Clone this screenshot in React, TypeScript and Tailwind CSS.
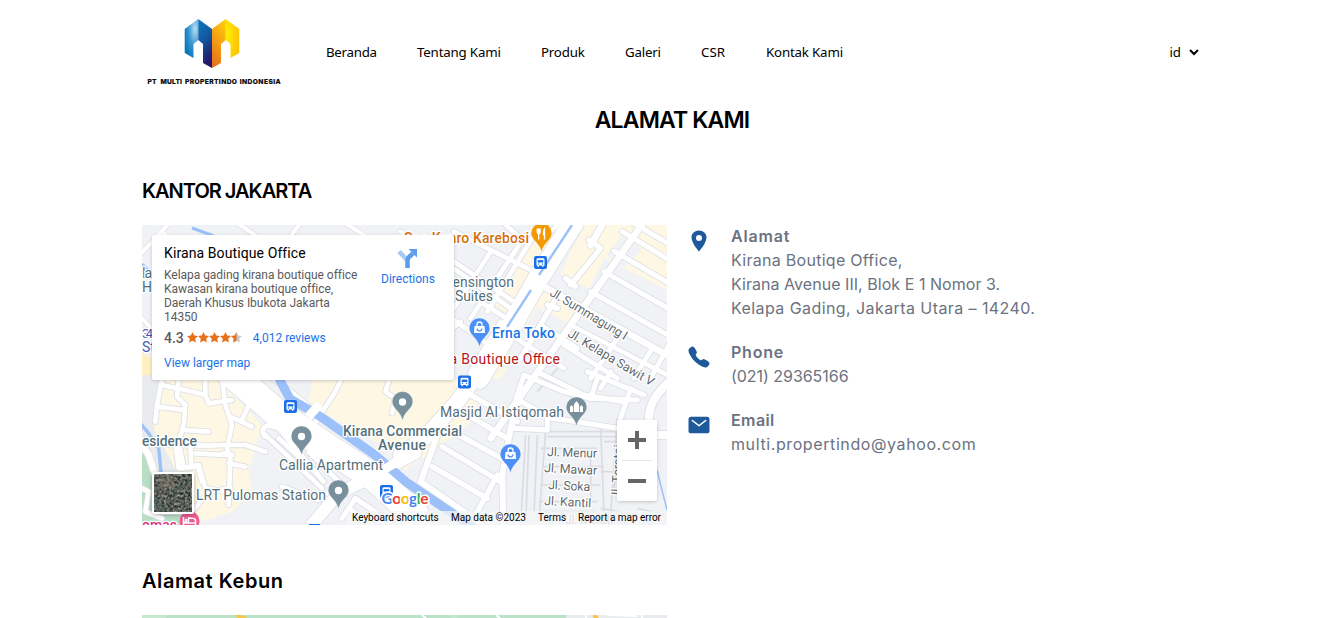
import React from "react";
import { IoCall, IoLocationSharp, IoMail } from "react-icons/io5";

const navItems = [
  { label: "Beranda", box: "w-[51px] tracking-[-0.28px]" },
  { label: "Tentang Kami", box: "w-[84px] tracking-[-0.18px]" },
  { label: "Produk", box: "w-[44px] tracking-[-0.2px]" },
  { label: "Galeri", box: "w-[36px] tracking-[-0.2px]" },
  { label: "CSR", box: "w-[25px] tracking-[0px]" },
  { label: "Kontak Kami", box: "w-[78px] tracking-[-0.18px]" },
];

function Logo() {
  return (
    <svg viewBox="0 0 134 70" className="block h-[70px] w-[134px]">
      <defs>
        <radialGradient id="lg1" cx="0.75" cy="0.25" r="0.8">
          <stop offset="0" stopColor="#b9def3" />
          <stop offset="0.55" stopColor="#3a97cf" />
          <stop offset="1" stopColor="#0b78bd" />
        </radialGradient>
        <linearGradient id="lg2" x1="0" y1="0" x2="0.3" y2="1">
          <stop offset="0" stopColor="#0a79be" />
          <stop offset="0.5" stopColor="#1457a0" />
          <stop offset="1" stopColor="#25176a" />
        </linearGradient>
        <linearGradient id="lg3" x1="0.6" y1="0" x2="0.2" y2="1">
          <stop offset="0" stopColor="#fdc60b" />
          <stop offset="0.5" stopColor="#f39b13" />
          <stop offset="1" stopColor="#e5701c" />
        </linearGradient>
        <radialGradient id="lg4" cx="0.1" cy="0.4" r="0.8">
          <stop offset="0" stopColor="#ffee00" />
          <stop offset="1" stopColor="#fdc707" />
        </radialGradient>
      </defs>
      <path d="M37.7 12 51.3 2V23L46.5 27V41L37.7 36Z" fill="url(#lg1)" />
      <path d="M51.3 2 65 12V51L56 46V27L51.3 23Z" fill="url(#lg2)" />
      <path d="M65 12 78.7 2V23L74 27V46L65 51Z" fill="url(#lg3)" />
      <path d="M78.7 2 92.3 12V36L83.5 41V27L78.7 23Z" fill="url(#lg4)" />
      <g fontFamily="Inter, sans-serif" fontWeight="800" fontSize="6.7" fill="#080808" stroke="#080808" strokeWidth=".15">
        <text x="0.5" y="66.9" textLength="9">PT</text>
        <text x="13.5" y="66.9" textLength="21.5">MULTI</text>
        <text x="38" y="66.9" textLength="52">PROPERTINDO</text>
        <text x="92.7" y="66.9" textLength="41">INDONESIA</text>
      </g>
    </svg>
  );
}

type Road = { d: string; w: number };

/* Each street block is drawn on a 3x grid that is scaled down into its quadrant. */
const northEast: Road[] = [
  { d: "M510 -10 400 165 330 290 225 460", w: 62 },
  { d: "M600 -10 560 60M720 -10 260 640", w: 20 },
  { d: "M430 190 789 390", w: 20 },
  { d: "M560 200 800 335M600 140 800 255M630 78 800 178M690 -5 800 60M655 20 800 108", w: 15 },
  { d: "M300 -5 340 30M-10 20 320 250M150 20 390 140M150 110 330 230M150 180 300 275", w: 14 },
  { d: "M345 60 200 280M260 80 150 250M390 30 250 260", w: 14 },
  { d: "M150 285 270 370M120 330 170 290M290 290 200 440", w: 14 },
  { d: "M555 45 590 70M590 70 500 180M485 160 515 185M430 240 460 250M465 205 350 400", w: 16 },
  { d: "M335 340 480 430M480 360 640 460M410 300 520 370M500 300 790 450", w: 14 },
  { d: "M640 340 560 460M745 370 690 460M800 350 740 460", w: 14 },
  { d: "M420 -10 440 20 460 0", w: 12 },
];
const southWest: Road[] = [
  { d: "M250 -20 400 110 560 220 700 310 820 420", w: 82 },
  { d: "M820 235 680 310 590 355 500 460", w: 36 },
  { d: "M370 -10 470 70 540 130 660 210", w: 16 },
  { d: "M610 -10 580 50 515 150M750 -10 730 50 760 70 750 115", w: 14 },
  { d: "M60 15 45 90 40 140M60 30 130 45 190 60 200 85 270 75M110 15 105 65 130 90 125 150 110 200 125 280", w: 14 },
  { d: "M190 60 190 15M240 10 250 90 270 150 255 220 265 250 260 390M265 125 330 155M330 70 300 135", w: 14 },
  { d: "M45 95 125 105M125 165 200 170M80 210 200 212 250 210 310 210 370 230M160 235 255 240M260 265 310 275M245 235 270 240", w: 14 },
  { d: "M100 205 110 280 170 270 190 340 250 350M170 280 180 320M120 280 160 275M145 210 148 270", w: 14 },
  { d: "M370 185Q350 160 380 150L410 160 545 320M365 175 540 340M410 190 530 300M500 230 590 320", w: 14 },
  { d: "M150 410 200 350 265 340M420 335 530 375 560 350", w: 14 },
  { d: "M-10 195 20 240 40 300", w: 20 },
  { d: "M0 340 20 350 10 410 60 430", w: 14 },
  { d: "M600 430 640 370 730 430M620 400 690 450", w: 15 },
];
const southEast: Road[] = [
  { d: "M225 -10 160 80 60 190 -10 240", w: 46 },
  { d: "M180 40 100 180 50 320 180 410 240 460M345 75 320 160 295 300 298 460", w: 18 },
  { d: "M200 60 340 140M140 90 310 190M110 150 310 260M115 215 290 320M85 275 250 370M280 300 220 410", w: 16 },
  { d: "M360 0 480 50 560 70 700 75M400 -10 540 60 660 80M360 0 330 90M330 160 430 165M430 165 430 130M345 75 440 130 520 140 640 160", w: 15 },
  { d: "M580 10 560 70M550 -10 720 60M680 40 650 130M620 -10 590 40", w: 15 },
  { d: "M790 25Q730 80 735 140L755 180H800", w: 24 },
];
const southEastMinor =
  "M365 180 350 450M375 180 365 450M400 180 390 420M430 170H640M430 185H640M410 220H580M415 275H600M410 330H590M405 380H580M425 165 405 440M590 160 600 420M640 130 620 420M460 -20 400 50M600 200H640M590 290H640M560 240V390M640 210 630 350M420 410H580M590 400 700 420M700 400 789 420";

function Roads({ roads, casing }: { roads: Road[]; casing: boolean }) {
  return (
    <>
      {roads.map((r, i) => (
        <path key={i} d={r.d} fill="none" stroke={casing ? "#dcdfe5" : "#ffffff"} strokeWidth={casing ? r.w + 5 : r.w} strokeLinecap="round" strokeLinejoin="round" />
      ))}
    </>
  );
}

const NE = "translate(262 0) scale(.33333)";
const SW = "translate(0 150) scale(.33333)";
const SE = "translate(262 150) scale(.33333)";

function Pin({ x, y, color, children }: { x: number; y: number; color: string; children?: React.ReactNode }) {
  return (
    <g transform={`translate(${x} ${y})`}>
      <path d="M0 0C-1.2-5-3-7-6-10.5C-9-13.5-10.3-16-10.3-19A10.3 10 0 0 1 10.3-19C10.3-16 9-13.5 6-10.5C3-7 1.2-5 0 0Z" fill={color} stroke="#ffffff" strokeOpacity=".45" strokeWidth=".7" />
      {children ?? <circle cy="-18.5" r="3.7" fill="#fff" />}
    </g>
  );
}

function Bag() {
  return (
    <g>
      <path d="M-5-21H5L5.5-14H-5.5Z" fill="#fff" />
      <path d="M-2.5-21V-22.5A2.5 2.5 0 0 1 2.5-22.5V-21" fill="none" stroke="#fff" strokeWidth="1.3" />
      <path d="M-2.4-18.5A2.4 2.4 0 0 0 2.4-18.5" fill="none" stroke="#4d90f5" strokeWidth="1.3" />
    </g>
  );
}

function BusStop({ x, y }: { x: number; y: number }) {
  return (
    <g transform={`translate(${x} ${y})`}>
      <rect x="-6.5" y="-6.5" width="13" height="13" rx="2" fill="#1a6ee8" />
      <path d="M-4-2.8Q-4-4.2-2.6-4.2H2.6Q4-4.2 4-2.8V3H3V4.3H1.6V3H-1.6V4.3H-3V3H-4Z" fill="#fff" />
      <path d="M-2.8-2.4H2.8V0H-2.8Z" fill="#1a6ee8" />
      <circle cx="-2" cy="1.5" r=".7" fill="#1a6ee8" />
      <circle cx="2" cy="1.5" r=".7" fill="#1a6ee8" />
    </g>
  );
}

function Label({ x, y, w, color = "#546e7a", size = 14, rotate = 0, weight = 400, children }: { x: number; y: number; w?: number; color?: string; size?: number; rotate?: number; weight?: number; children: string }) {
  return (
    <text
      transform={`translate(${x} ${y}) rotate(${rotate})`}
      textLength={w}
      fontSize={size}
      fontFamily="Roboto, sans-serif"
      fontWeight={weight}
      fill={color}
      stroke="#ffffff"
      strokeWidth="2.6"
      strokeLinejoin="round"
      paintOrder="stroke"
    >
      {children}
    </text>
  );
}

function MapDrawing() {
  return (
    <svg viewBox="0 0 525 300" className="block h-[300px] w-[525px]">
      <rect width="525" height="300" fill="#f0f2f5" />
      <path d="M0 150H22L12 205 35 240V300H0Z" fill="#e9ebef" />
      <g transform={NE} fill="#fef7e3">
        <path d="M355 90 440 0H480L310 265 270 240Z" />
        <path d="M545 0H800V200L600 100 555 190 470 150 500 80Z" />
        <path d="M420 200 530 225 490 295 400 245 360 310 345 300Z" />
        <path d="M260 410 310 430 290 460H220Z" />
      </g>
      <path d="M465 30 480 10 500 24 480 46Z" fill="#f0f2f5" />
      <g transform={SW}>
        <path d="M60 15H230L360 150 340 220 320 290 330 350 270 410 180 440 150 410V290L110 300 35 160Z" fill="#fef7e3" />
        <path d="M510 15H792V230L700 200 540 110 500 80Z" fill="#fef7e3" />
        <path d="M0 230 45 280 40 420H130V450H0Z" fill="#b8dfc4" />
        <path d="M-5 145 20 175 50 220 58 300" fill="none" stroke="#9cc0fa" strokeWidth="10" />
      </g>
      <path d="M262 155H320L338 172 328 198 296 222 262 246Z" fill="#fef7e3" />
      <g transform={NE}><Roads roads={northEast} casing /></g>
      <g transform={SW}><Roads roads={southWest} casing /></g>
      <g transform={SE}><Roads roads={southEast} casing /></g>
      <g transform={SE} fill="none" stroke="#d9dce3" strokeWidth="5"><path d={southEastMinor} /></g>
      <g transform={NE}><Roads roads={northEast} casing={false} /></g>
      <g transform={SW}><Roads roads={southWest} casing={false} /></g>
      <g transform={SE}><Roads roads={southEast} casing={false} /></g>
      <path d="M135 150 148 174 171 187 182 194 233 230 264 257 332 303" fill="none" stroke="#9cc0fa" strokeWidth="9" />
      <path d="M430 0 397 50M389 65 365 102" fill="none" stroke="#9cc0fa" strokeWidth="2.4" />
      <path d="M515 245 525 285" fill="none" stroke="#9cc0fa" strokeWidth="1.5" />
      <path d="M166 192 178 179M234 249 262 233" stroke="#fff" strokeWidth="9" />
      {/* Streets along the card's top and left edges */}
      <g fill="none" stroke="#dcdfe5" strokeWidth="5.5"><path d="M-2 30 30 -5M10 22 24 8M92 -4 128 20M200 -4 225 12M148 12 160 -4M-3 90 10 104" /></g>
      <g fill="none" stroke="#fff" strokeWidth="4"><path d="M-2 30 30 -5M10 22 24 8M92 -4 128 20M200 -4 225 12M148 12 160 -4M-3 90 10 104" /></g>
      <path d="M50 3 72 11M0 39 10 49" stroke="#9cc0fa" strokeWidth="3" />
      <path d="M0 128 10 133V150H0Z" fill="#fef0c0" />

      <Label x={262} y={18} w={125} weight={500} color="#d56e0c">Soc Konro Karebosi</Label>
      <Pin x={399.5} y={27} color="#f29900">
        <path d="M-4.2-23.5V-20Q-4.2-18.5-2.8-18.5V-12.5M-1.4-23.5V-20Q-1.4-18.5-2.8-18.5M-2.8-23.5V-18M3-12.5V-23Q1.6-21 2-17.5H3" fill="none" stroke="#fff" strokeWidth="1.4" />
      </Pin>
      <BusStop x={398.5} y={37.5} />
      <BusStop x={322.5} y={157} />
      <BusStop x={148.5} y={181.5} />
      <BusStop x={244.5} y={266.5} />
      <path d="M167 299H178V301H167Z" fill="#1a6ee8" />
      <Label x={302} y={62} w={70}>Kensington</Label>
      <Label x={313} y={76} w={38}>Suites</Label>
      <Pin x={337.5} y={122} color="#4d90f5"><Bag /></Pin>
      <Label x={350} y={113} w={63} weight={500} color="#1a73e8">Erna Toko</Label>
      <Label x={274} y={139} w={144} color="#b31421">Kirana Boutique Office</Label>
      <Label x={407} y={70} w={88} size={12.5} rotate={31} color="#62676d">Jl. Summagung I</Label>
      <Label x={425} y={111} w={98} size={12.5} rotate={31} color="#62676d">Jl. Kelapa Sawit V</Label>
      <Pin x={434.5} y={201} color="#78909c">
        <path d="M-6.5-14V-19L-5-21-3.5-19V-14M-2.8-14V-20Q-2.8-22 0-25Q2.8-22 2.8-20V-14M3.5-14V-19L5-21 6.5-19V-14" fill="#fff" />
      </Pin>
      <Label x={298} y={192} w={124}>Masjid Al Istiqomah</Label>
      <Pin x={368.5} y={248} color="#4d90f5"><Bag /></Pin>
      <Pin x={260.5} y={195.5} color="#78909c" />
      <Label x={201} y={211} w={119} weight={500}>Kirana Commercial</Label>
      <Label x={236} y={225} w={48} weight={500}>Avenue</Label>
      <Pin x={159.5} y={230} color="#78909c" />
      <Label x={137} y={245} w={104}>Callia Apartment</Label>
      <Pin x={196.5} y={284} color="#78909c" />
      <Label x={54} y={275} w={130}>LRT Pulomas Station</Label>
      <Label x={0} y={221} w={55} weight={500}>esidence</Label>
      <Label x={0} y={53} w={10}>La</Label>
      <Label x={0} y={67}>Hu</Label>
      <Label x={0} y={113} w={11} size={13} color="#4758b8">34</Label>
      <Label x={0} y={127} color="#4758b8">St</Label>
      <Label x={0} y={304.5} w={35} weight={500} color="#e0327c">omas</Label>
      <g transform="translate(47.5 296)">
        <circle r="10" fill="#ee5c94" />
        <path d="M-6-4V4M-6 2H6V-1Q6-3-1-3V1H-6M6 2V4" fill="none" stroke="#fff" strokeWidth="1.5" />
        <circle cx="-3.3" cy="-1" r="1.3" fill="#fff" />
      </g>
      <Label x={405} y={231} w={50} size={12.5} rotate={2} color="#62676d">Jl. Menur</Label>
      <Label x={402} y={247} w={53} size={12.5} rotate={3} color="#62676d">Jl. Mawar</Label>
      <Label x={406} y={264} w={42} size={12.5} rotate={3} color="#62676d">Jl. Soka</Label>
      <Label x={402} y={280} w={47} size={12.5} rotate={3} color="#62676d">Jl. Kantil</Label>
      <Label x={423} y={299} w={48} size={12.5} color="#9a9da2">Jl. Melati</Label>
      <Label x={478} y={274} size={12.5} rotate={-87} color="#62676d">Jl. Teratai</Label>
      <text x="239.5" y="278.5" textLength="47" fontSize="15.5" fontFamily="Lato, sans-serif" fontWeight="700" stroke="#fff" strokeWidth="3" paintOrder="stroke" strokeLinejoin="round">
        <tspan fill="#4285f4">G</tspan><tspan fill="#ea4335">o</tspan><tspan fill="#fbbc04">o</tspan><tspan fill="#4285f4">g</tspan><tspan fill="#34a853">l</tspan><tspan fill="#ea4335">e</tspan>
      </text>
    </svg>
  );
}

const star = "M5.5 0 7.2 3.6 11 4.1 8.2 6.8 8.9 10.6 5.5 8.8 2.1 10.6 2.8 6.8 0 4.1 3.8 3.6Z";

function Stars() {
  return (
    <svg viewBox="0 0 55 11" className="ml-[3px] h-[11px] w-[55px]">
      {[0, 1, 2, 3].map((i) => (
        <path key={i} d={star} transform={`translate(${i * 11} 0)`} fill="#e7711b" />
      ))}
      <path d={star} transform="translate(44 0)" fill="#c9c9c9" />
      <path d="M49.5 0V8.8L46.1 10.6 46.8 6.8 44 4.1 47.8 3.6Z" fill="#e7711b" />
    </svg>
  );
}

function PlaceCard() {
  return (
    <div className="absolute left-[10px] top-[10px] flex h-[145px] w-[302px] justify-between rounded-[2px] bg-white pl-3 pt-[9px] font-[Roboto,sans-serif] text-[12px] leading-[14px] shadow-[0_1px_4px_-1px_rgba(0,0,0,0.3)]">
      <div className="w-[200px] whitespace-nowrap">
        <div className="text-[14px] leading-[18px] tracking-[0.1px] text-black">Kirana Boutique Office</div>
        <div className="mt-[6px] tracking-[-0.04px] text-[#5b5b5b]">
          Kelapa gading kirana boutique office<br />Kawasan kirana boutique office,<br />Daerah Khusus Ibukota Jakarta<br />14350
        </div>
        <div className="mt-[6px] flex items-center">
          <span className="text-[14px] font-medium text-[#5b5b5b]">4.3</span>
          <Stars />
          <span className="ml-[11px] pt-px text-[#1a73e8]">4,012 reviews</span>
        </div>
        <div className="mt-[11px] text-[#1a73e8]">View larger map</div>
      </div>
      <div className="flex w-[93px] flex-col items-center pt-[4px] text-[#1a73e8]">
        <svg viewBox="0 0 22 22" className="h-[22px] w-[22px]">
          <path d="M2 3.5 10 12" stroke="#a9c9f4" strokeWidth="4.5" />
          <path d="M10.5 20V12.5Q10.5 10 12.5 8.5L16 5.5" fill="none" stroke="#5b9cec" strokeWidth="4.6" />
          <path d="M11.5 1H20V9.5Z" fill="#5b9cec" />
        </svg>
        <span className="mt-[2px]">Directions</span>
      </div>
    </div>
  );
}

function SatelliteThumb() {
  return (
    <div className="absolute left-[10px] top-[247px] h-[42px] w-[42px] rounded-[2px] border-2 border-white bg-[#555b57] shadow-[0_1px_4px_rgba(0,0,0,0.3)]">
      <svg viewBox="0 0 38 38" className="block h-[38px] w-[38px]">
        <filter id="aerial" x="0" y="0" width="100%" height="100%" colorInterpolationFilters="sRGB">
          <feTurbulence type="fractalNoise" baseFrequency=".38" numOctaves="3" seed="5" />
          <feColorMatrix values=".8 0 0 0 -.05  .8 0 0 0 -.03  .8 0 0 0 -.05  0 0 0 0 1" />
        </filter>
        <rect width="38" height="38" filter="url(#aerial)" />
        <path d="M3 3 15 0 23 12 8 18Z" fill="#8d7d70" opacity=".4" />
        <path d="M0 22 12 38M0 29 7 38M18 18 38 6" stroke="#3e5955" strokeWidth="2.5" opacity=".5" />
      </svg>
    </div>
  );
}

function OfficeMap() {
  return (
    <div className="relative h-[300px] w-[525px] shrink-0 overflow-hidden">
      <MapDrawing />
      <PlaceCard />
      <SatelliteThumb />
      <div className="absolute left-[475px] top-[195px] flex h-[81px] w-10 flex-col items-center rounded-[2px] bg-white shadow-[0_1px_4px_-1px_rgba(0,0,0,0.3)]">
        <svg viewBox="0 0 18 18" className="mt-[11px] h-[18px] w-[18px]"><path d="M0 9H18M9 0V18" stroke="#666" strokeWidth="4" /></svg>
        <div className="mt-[11px] h-px w-[30px] bg-[#e6e6e6]" />
        <svg viewBox="0 0 18 18" className="mt-[11px] h-[18px] w-[18px]"><path d="M0 9H18" stroke="#666" strokeWidth="4" /></svg>
      </div>
      <div className="absolute bottom-0 right-0 flex h-[14px] items-center gap-3 whitespace-nowrap bg-[#f5f5f5]/75 pl-[5px] pr-[6px] font-[Roboto,sans-serif] text-[10px] leading-[14px] text-black">
        <span className="w-[87px]">Keyboard shortcuts</span>
        <span className="w-[75px]">Map data ©2023</span>
        <span className="w-[28px]">Terms</span>
        <span className="w-[83px] tracking-[-0.03px]">Report a map error</span>
      </div>
    </div>
  );
}

const contacts = [
  { title: "Alamat", titleTrack: "tracking-[0.85px]", Icon: IoLocationSharp, lines: [
    { text: "Kirana Boutiqe Office,", track: "tracking-[0.28px]" },
    { text: "Kirana Avenue III, Blok E 1 Nomor 3.", track: "tracking-[0.04px]" },
    { text: "Kelapa Gading, Jakarta Utara – 14240.", track: "tracking-[0.42px]" },
  ] },
  { title: "Phone", titleTrack: "tracking-[0.8px]", Icon: IoCall, lines: [{ text: "(021) 29365166", track: "tracking-[-0.04px]" }] },
  { title: "Email", titleTrack: "tracking-[0.4px]", Icon: IoMail, lines: [{ text: "multi.propertindo@yahoo.com", track: "tracking-[0.6px]" }] },
];

export default function App() {
  return (
    <div className="h-[618px] w-full overflow-hidden bg-white font-[Inter,sans-serif] text-black">
      <div className="ml-[142px] w-[1060px]">
        <header className="flex h-[104px] items-center">
          <div className="ml-[5px]"><Logo /></div>
          <nav className="ml-[45px] flex gap-10 whitespace-nowrap font-['Noto_Sans','Open_Sans',sans-serif] text-[13.3px] leading-5">
            {navItems.map((item) => (
              <a key={item.label} className={item.box}>{item.label}</a>
            ))}
          </nav>
          <div className="ml-auto mr-[3px] flex items-center gap-[8px] font-['Noto_Sans','Open_Sans',sans-serif] text-[13.3px] leading-5">
            <span>id</span>
            <svg viewBox="0 0 10 7" className="h-[7px] w-[10px]"><path d="M1 1 5 5 9 1" fill="none" stroke="#000" strokeWidth="2" /></svg>
          </div>
        </header>
        <h1 className="text-center text-[23px] font-semibold leading-8 tracking-[-0.85px]">ALAMAT KAMI</h1>
        <h2 className="mt-[41px] text-[20px] font-semibold leading-7 tracking-[-1px]">KANTOR JAKARTA</h2>
        <div className="mt-5 flex">
          <OfficeMap />
          <div className="ml-5 flex flex-col gap-5 text-[16px] leading-6 text-[#6b7280]">
            {contacts.map(({ title, titleTrack, Icon, lines }) => (
              <div key={title} className="flex gap-5">
                <Icon className="mt-1 h-6 w-6 text-[#1e5a9b]" />
                <div className="-mt-px mb-px whitespace-nowrap">
                  <div className={`font-semibold ${titleTrack}`}>{title}</div>
                  {lines.map((l) => (
                    <div key={l.text} className={l.track}>{l.text}</div>
                  ))}
                </div>
              </div>
            ))}
          </div>
        </div>
        <h2 className="mt-[42px] text-[20px] font-semibold leading-7 tracking-[0.55px]">Alamat Kebun</h2>
        <svg viewBox="0 0 525 300" className="mt-5 block h-[300px] w-[525px]">
          <rect width="525" height="300" fill="#b9e2c6" />
          <path d="M0 0H26L16 12 0 20ZM305 0 312 4 318 0Z" fill="#c6e8cf" />
          <path d="M424 0H525V300H440V3H424Z" fill="#e8eaed" />
          <path d="M94 0 106 5M452 0 456 5" stroke="#f6c54b" strokeWidth="4" />
          <path d="M280 0 286 5M354 0 360 5M444 0V300M465 0 495 1M500 0V5" stroke="#fff" strokeWidth="2" />
        </svg>
      </div>
    </div>
  );
}
